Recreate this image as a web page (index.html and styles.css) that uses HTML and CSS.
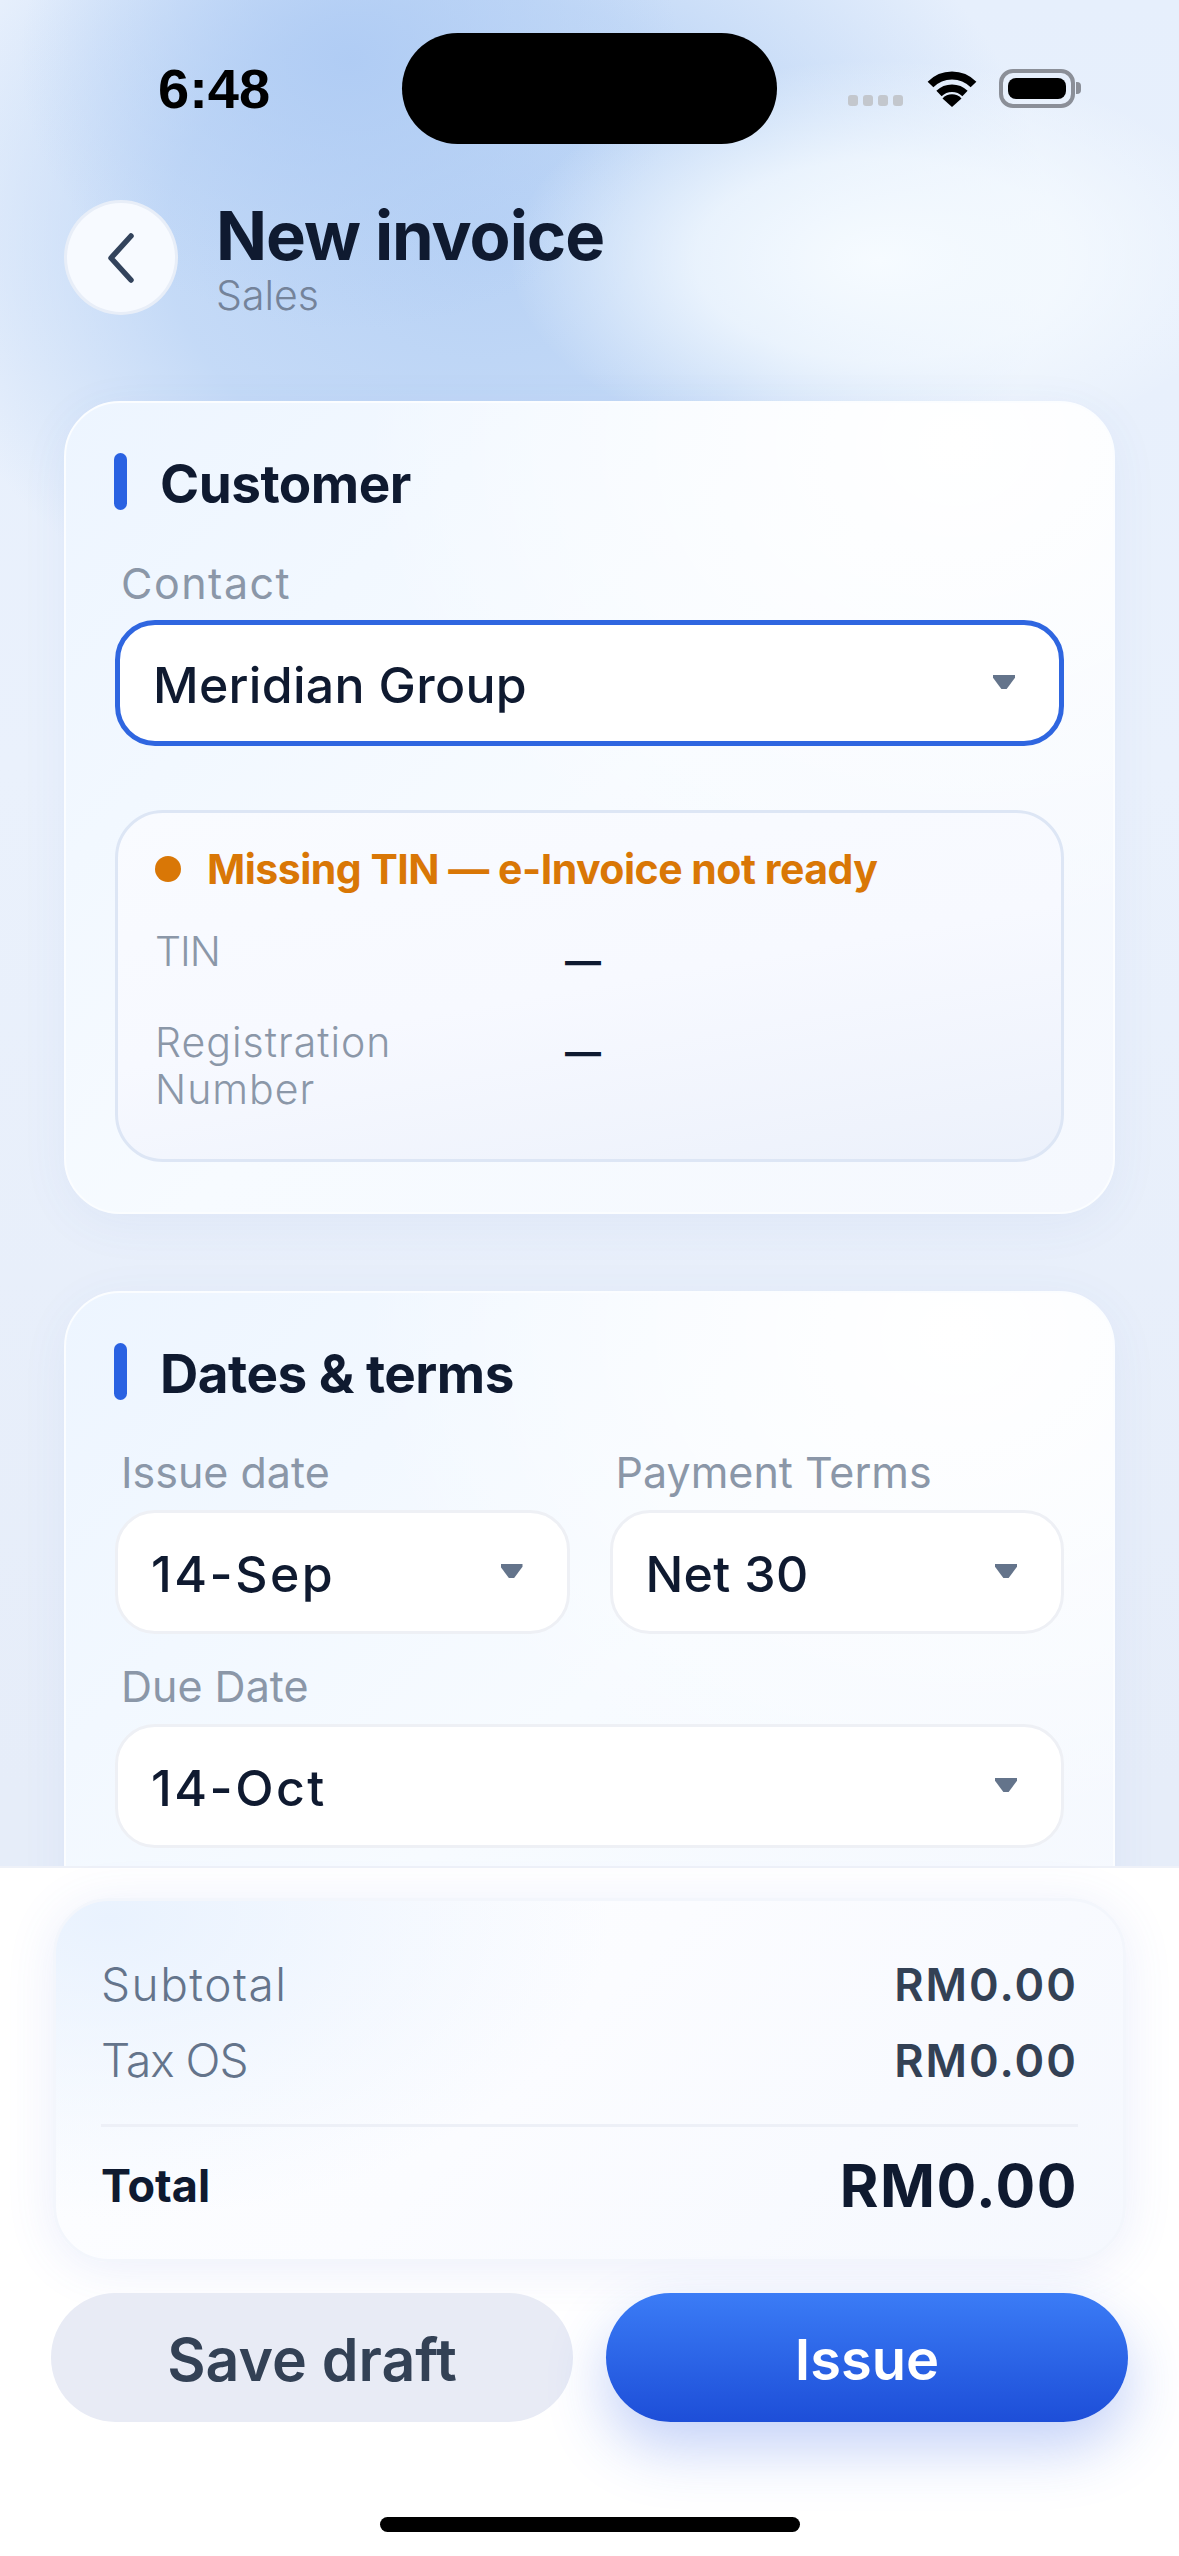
FILE: index.html
```html
<!DOCTYPE html>
<html lang="en">
<head>
    <meta charset="UTF-8" />
    <meta name="viewport" content="width=device-width, initial-scale=1.0" />
    <title>New invoice</title>
    <link rel="stylesheet" href="styles.css">
</head>
<body>
    <div class="pantalla">
        <div class="status-bar">
            <span class="hora">6:48</span>
            <div class="isla"></div>
            <div class="status-iconos">
                <div class="señal"><i></i><i></i><i></i><i></i></div>
                <svg class="wifi" viewBox="0 0 50 38" width="50" height="38">
                    <path d="M3.500 15.500a30 30 0 0 1 43 0" fill="none" stroke="#000" stroke-width="8"/>
                    <path d="M12 24.500a18.500 18.500 0 0 1 26 0" fill="none" stroke="#000" stroke-width="7.500"/>
                    <path d="M25 38L15.500 29.500a13 13 0 0 1 19 0z" fill="#000"/>
                </svg>
                <div class="bateria"><div class="bateria-nivel"></div></div>
                <div class="bateria-tapa"></div>
            </div>
        </div>

        <header class="cabecera">
            <button class="volver">
                <svg viewBox="0 0 36 54" width="36" height="54">
                    <path d="M28 5L8 27l20 22" fill="none" stroke="#33435c" stroke-width="5.500" stroke-linecap="round" stroke-linejoin="round"/>
                </svg>
            </button>
            <div>
                <h1>New invoice</h1>
                <p class="subtitulo">Sales</p>
            </div>
        </header>

        <section class="card">
            <h2 class="card-titulo">Customer</h2>
            <label class="etiqueta etiqueta-contacto">Contact</label>
            <div class="campo campo-activo"><span>Meridian Group</span><i class="flecha"></i></div>

            <div class="panel">
                <div class="aviso"><i class="punto"></i>Missing TIN — e-Invoice not ready</div>
                <div class="dato"><span class="dato-nombre dato-tin">TIN</span><span class="dato-valor">—</span></div>
                <div class="dato"><span class="dato-nombre">Registration Number</span><span class="dato-valor">—</span></div>
            </div>
        </section>

        <section class="card card-fechas">
            <h2 class="card-titulo">Dates &amp; terms</h2>
            <div class="fila-doble">
                <div>
                    <label class="etiqueta">Issue date</label>
                    <div class="campo campo-fecha"><span>14-Sep</span><i class="flecha"></i></div>
                </div>
                <div>
                    <label class="etiqueta">Payment Terms</label>
                    <div class="campo"><span>Net 30</span><i class="flecha"></i></div>
                </div>
            </div>
            <label class="etiqueta etiqueta-vence">Due Date</label>
            <div class="campo campo-fecha"><span>14-Oct</span><i class="flecha"></i></div>
        </section>

        <footer class="pie">
            <div class="totales">
                <div class="linea"><span>Subtotal</span><b>RM0.00</b></div>
                <div class="linea"><span class="linea-tax">Tax OS</span><b>RM0.00</b></div>
                <div class="linea-total"><span>Total</span><b>RM0.00</b></div>
            </div>
            <div class="acciones">
                <button class="btn btn-borrador">Save draft</button>
                <button class="btn btn-emitir">Issue</button>
            </div>
            <div class="home-bar"></div>
        </footer>
    </div>
</body>
</html>
```

FILE: styles.css
```css
* {
    box-sizing: border-box;
}
body {
    margin: 0;
    font-family: 'Inter', 'Liberation Sans', sans-serif;
    color: #0f1a30;
}
.pantalla {
    position: relative;
    width: 1179px;
    height: 2556px;
    overflow: hidden;
    background:
        radial-gradient(ellipse 370px 200px at 880px 260px, #f6fbff 0%, rgba(246,251,255,0.75) 50%, rgba(246,251,255,0) 100%),
        radial-gradient(ellipse 330px 270px at 350px 60px, rgba(174,203,244,0.9) 0%, rgba(174,203,244,0) 100%),
        radial-gradient(ellipse 570px 440px at 480px 240px, #b8d2f5 0%, rgba(190,214,246,0.85) 55%, rgba(190,214,246,0) 100%),
        linear-gradient(180deg, #e6effc 0%, #eaf1fc 30%, #e6edf9 70%);
}

/* barra de estado */
.status-bar {
    position: relative;
    display: flex;
    justify-content: space-between;
    align-items: center;
    height: 176px;
    padding: 0 98px 0 158px;
}
.hora {
    font-family: 'Liberation Sans', sans-serif;
    font-size: 56px;
    font-weight: 700;
    color: #000;
}
.isla {
    position: absolute;
    left: 402px;
    top: 33px;
    width: 375px;
    height: 111px;
    border-radius: 56px;
    background: #000;
}
.status-iconos {
    display: flex;
    align-items: center;
}
.señal {
    display: flex;
    gap: 5px;
    margin-top: 24px;
    margin-right: 24px;
}
.señal i {
    width: 10px;
    height: 11px;
    border-radius: 3px;
    background: #c3c7cd;
}
.wifi {
    margin-right: 22px;
}
.bateria {
    width: 76px;
    height: 39px;
    padding: 5px;
    border: 4px solid #8b8f98;
    border-radius: 14px;
}
.bateria-nivel {
    height: 100%;
    border-radius: 8px;
    background: #000;
}
.bateria-tapa {
    width: 5px;
    height: 12px;
    margin-left: 1px;
    border-radius: 0 4px 4px 0;
    background: #8b8f98;
}

/* cabecera */
.cabecera {
    display: flex;
    align-items: flex-start;
    gap: 38px;
    margin: 24px 0 0 64px;
    height: 201px;
}
.volver {
    display: flex;
    align-items: center;
    justify-content: center;
    width: 114px;
    height: 115px;
    padding: 0;
    border: 3px solid #e8eef8;
    border-radius: 50%;
    background: #f7faff;
}
h1 {
    margin: 0;
    font-size: 67px;
    line-height: 72px;
    font-weight: 700;
    letter-spacing: -1px;
    color: #0f1a30;
}
.subtitulo {
    margin: 0;
    font-size: 41px;
    line-height: 46px;
    font-weight: 300;
    color: #74839a;
}

/* tarjetas */
.card {
    margin: 0 64px;
    padding: 50px 49px;
    border: 2px solid #fbfdff;
    border-radius: 56px;
    background:
        radial-gradient(ellipse 600px 500px at 85% 5%, #ffffff 0%, rgba(255,255,255,0) 100%),
        linear-gradient(135deg, #edf5ff 0%, #f7fbff 50%, #f5f8fe 100%);
    box-shadow: 0 10px 50px rgba(70,100,190,0.06);
}
.card-fechas {
    margin-top: 77px;
    height: 800px;
}
.card-titulo {
    position: relative;
    margin: 0;
    padding: 3px 0 0 45px;
    font-size: 53px;
    line-height: 57px;
    font-weight: 700;
    letter-spacing: -0.5px;
    color: #0f1a30;
}
.card-titulo::before {
    content: "";
    position: absolute;
    left: -1px;
    top: 0;
    width: 13px;
    height: 57px;
    border-radius: 7px;
    background: #2a62e2;
}
.etiqueta {
    display: block;
    margin: 0 0 13px 6px;
    font-size: 43px;
    line-height: 50px;
    font-weight: 400;
    color: #8b97a8;
}
.etiqueta-contacto {
    margin-top: 45px;
    margin-bottom: 12px;
    letter-spacing: 1.500px;
}
.etiqueta-vence {
    margin-top: 27px;
}
.campo {
    display: flex;
    align-items: center;
    justify-content: space-between;
    height: 124px;
    padding: 0 44px 0 33px;
    border: 3px solid #eef0f5;
    border-radius: 40px;
    background: #fff;
    font-size: 50px;
    font-weight: 500;
    letter-spacing: 0.3px;
    color: #0f1a30;
}
.campo span {
    padding-top: 4px;
}
.campo-activo {
    height: 126px;
    border: 5px solid #2f66e0;
}
.campo-fecha {
    letter-spacing: 2.500px;
}
.flecha {
    width: 22px;
    height: 14px;
    margin-top: -2px;
    background: #64748b;
    clip-path: polygon(0 0, 100% 0, 100% 20%, 62% 100%, 38% 100%, 0 20%);
}

/* panel de datos fiscales */
.panel {
    margin-top: 64px;
    padding: 31px 37px 46px;
    border: 3px solid #dde6f5;
    border-radius: 48px;
    background: linear-gradient(170deg, #f9fbff 0%, #f7f9ff 50%, #ecf1fb 100%);
}
.aviso {
    display: flex;
    align-items: center;
    gap: 26px;
    margin-bottom: 34px;
    font-size: 41px;
    line-height: 50px;
    font-weight: 700;
    letter-spacing: -0.5px;
    color: #d97706;
}
.punto {
    width: 26px;
    height: 26px;
    border-radius: 50%;
    background: #d97706;
}
.dato {
    display: grid;
    grid-template-columns: 300px 1fr;
    column-gap: 110px;
    margin-bottom: 44px;
}
.dato:last-child {
    margin-bottom: 0;
}
.dato-nombre {
    font-size: 41px;
    line-height: 47px;
    font-weight: 300;
    letter-spacing: 1px;
    color: #8b97a8;
}
.dato-tin {
    letter-spacing: -1px;
}
.dato-valor {
    padding-top: 10px;
    margin-bottom: -10px;
    font-size: 36px;
    line-height: 47px;
    font-weight: 700;
    color: #0f1a30;
}

.fila-doble {
    display: grid;
    grid-template-columns: 1fr 1fr;
    gap: 40px;
    margin-top: 44px;
}

/* pie fijo con totales */
.pie {
    position: absolute;
    left: 0;
    right: 0;
    bottom: 0;
    height: 690px;
    padding: 30px 51px 0;
    border-top: 2px solid #eef1f8;
    background: #fff;
}
.totales {
    margin: 0 2px;
    height: 364px;
    padding: 45px 45px 0;
    border: 3px solid #f3f6fc;
    border-radius: 56px;
    background:
        radial-gradient(ellipse 500px 300px at 5% 5%, #e9f2fe 0%, rgba(233,242,254,0) 100%),
        linear-gradient(135deg, #fdfeff 0%, #fbfcff 45%, #f5f8fe 100%);
    box-shadow: 0 6px 50px rgba(70,100,220,0.11);
}
.linea {
    display: flex;
    justify-content: space-between;
    align-items: center;
    height: 76px;
    font-size: 46px;
    font-weight: 300;
    letter-spacing: 1.500px;
    color: #64748b;
}
.linea-tax {
    letter-spacing: -1px;
}
.linea b {
    font-size: 45px;
    font-weight: 600;
    letter-spacing: 2px;
    color: #334155;
}
.linea-total {
    display: flex;
    justify-content: space-between;
    align-items: center;
    margin-top: 26px;
    height: 120px;
    border-top: 3px solid #edf0f7;
    font-size: 45px;
    font-weight: 700;
    color: #0f1a30;
}
.linea-total b {
    font-size: 59px;
    font-weight: 700;
    letter-spacing: 1.500px;
}
.acciones {
    display: grid;
    grid-template-columns: 1fr 1fr;
    gap: 33px;
    margin-top: 31px;
}
.btn {
    height: 129px;
    padding: 4px 0 0;
    border: none;
    border-radius: 65px;
    font-family: inherit;
    font-size: 56px;
    font-weight: 600;
}
.btn-borrador {
    background: #e8ebf5;
    color: #334155;
    font-size: 59px;
}
.btn-emitir {
    background: linear-gradient(180deg, #3b7cf6 0%, #1d4ed8 100%);
    color: #fff;
    box-shadow: 0 26px 60px rgba(40,90,230,0.28);
}
.home-bar {
    position: absolute;
    left: 380px;
    bottom: 24px;
    width: 420px;
    height: 15px;
    border-radius: 8px;
    background: #000;
}
```
